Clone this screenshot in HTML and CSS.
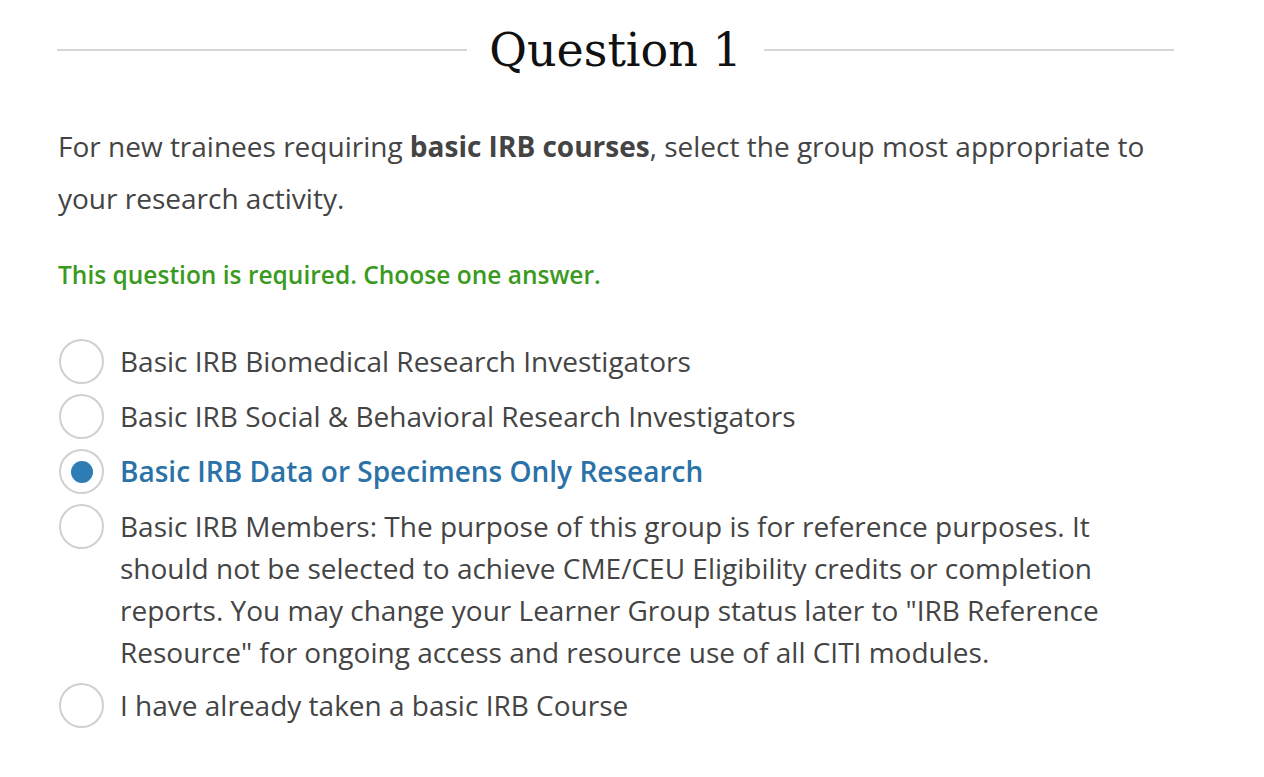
FILE: index.html
```html
<!DOCTYPE html>
<html>
<head>
<meta charset="utf-8">
<link rel="stylesheet" href="styles.css">
</head>
<body>
<div class="question">
  <div class="q-header">
    <span class="rule"></span>
    <h1 class="q-title">Question 1</h1>
    <span class="rule"></span>
  </div>
  <p class="q-text">For new trainees requiring <strong>basic IRB courses</strong>, select the group most appropriate to your research activity.</p>
  <p class="q-required">This question is required. Choose one answer.</p>
  <ul class="options">
    <li class="option"><span class="radio"></span><span class="label">Basic IRB Biomedical Research Investigators</span></li>
    <li class="option"><span class="radio"></span><span class="label">Basic IRB Social &amp; Behavioral Research Investigators</span></li>
    <li class="option selected"><span class="radio"></span><span class="label">Basic IRB Data or Specimens Only Research</span></li>
    <li class="option"><span class="radio"></span><span class="label">Basic IRB Members: The purpose of this group is for reference purposes. It should not be selected to achieve CME/CEU Eligibility credits or completion reports. You may change your Learner Group status later to "IRB Reference Resource" for ongoing access and resource use of all CITI modules.</span></li>
    <li class="option"><span class="radio"></span><span class="label">I have already taken a basic IRB Course</span></li>
  </ul>
</div>
</body>
</html>
```
FILE: styles.css
```css
html, body {
  margin: 0;
  padding: 0;
  background: #fff;
}
body {
  font-family: "Open Sans", "Liberation Sans", sans-serif;
  color: #444;
}
.question {
  width: 1117px;
  margin-left: 57px;
}
.q-header {
  display: flex;
  align-items: center;
  gap: 22px;
  height: 100px;
}
.rule {
  flex: 1;
  height: 2px;
  background: #d6d6d6;
}
.q-title {
  margin: 0;
  font-family: "DejaVu Serif", "Liberation Serif", serif;
  font-weight: normal;
  font-size: 46px;
  color: #111;
  line-height: 1;
}
.q-text {
  margin: 20px 0 0 1px;
  font-size: 28px;
  line-height: 52px;
  color: #444;
}
.q-text strong {
  font-weight: 700;
  color: #444;
}
.q-required {
  margin: 36px 0 0 1px;
  font-size: 24.5px;
  font-weight: 600;
  color: #3a9a1e;
  line-height: 30px;
}
.options {
  list-style: none;
  margin: 49px 0 0 2px;
  padding: 0;
  display: flex;
  flex-direction: column;
  gap: 10px;
}
.option {
  display: flex;
  align-items: flex-start;
  gap: 16px;
}
.radio {
  flex: none;
  width: 41px;
  height: 41px;
  border: 2px solid #d0d0d0;
  border-radius: 50%;
  box-sizing: content-box;
  display: flex;
  align-items: center;
  justify-content: center;
}
.label {
  flex: 1;
  font-size: 28px;
  line-height: 42px;
  color: #444;
  padding-top: 1px;
}
.option.selected .radio::after {
  content: "";
  width: 22px;
  height: 22px;
  border-radius: 50%;
  background: #2e7db5;
}
.option.selected .label {
  color: #2a72a8;
  font-weight: 600;
}
```
